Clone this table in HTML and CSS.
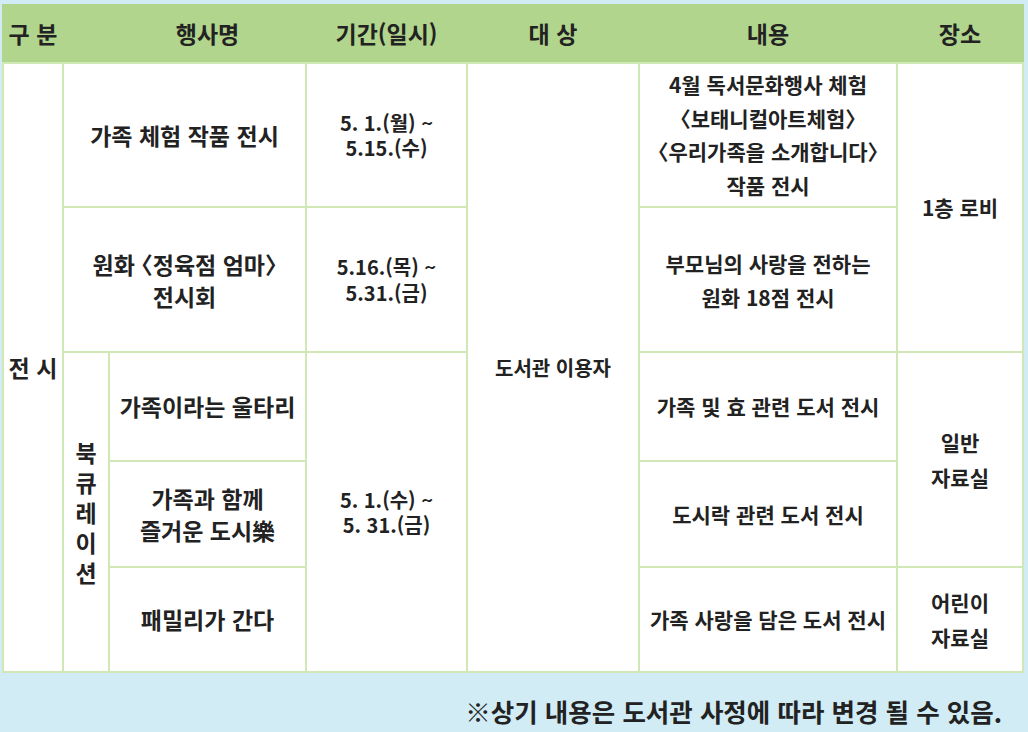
FILE: index.html
```html
<!DOCTYPE html>
<html lang="ko">
<head>
<meta charset="utf-8">
<title>가정의 달 행사 안내</title>
<link rel="stylesheet" href="styles.css">
</head>
<body>
<div class="page">
  <div class="table">
    <div class="head">
      <div class="h h-div">구 분</div>
      <div class="h h-name">행사명</div>
      <div class="h h-date">기간(일시)</div>
      <div class="h h-target">대 상</div>
      <div class="h h-content">내용</div>
      <div class="h h-place">장소</div>
    </div>
    <div class="body">
      <div class="c c-div big"><div class="t">전 시</div></div>
      <div class="c c-name1 big"><div class="t">가족 체험 작품 전시</div></div>
      <div class="c c-date1 date"><div class="t">5. 1.(월) ~<br>5.15.(수)</div></div>
      <div class="c c-target"><div class="t">도서관 이용자</div></div>
      <div class="c c-cont1 cont lh-list"><div class="t">4월 독서문화행사 체험<br><span class="br">〈</span>보태니컬아트체험<span class="br">〉</span><br><span class="br">〈</span>우리가족을 소개합니다<span class="br">〉</span><br>작품 전시</div></div>
      <div class="c c-place1 place"><div class="t">1층 로비</div></div>

      <div class="c c-name2 big lh-two"><div class="t">원화 <span class="br">〈</span>정육점 엄마<span class="br">〉</span><br>전시회</div></div>
      <div class="c c-date2 date"><div class="t">5.16.(목) ~<br>5.31.(금)</div></div>
      <div class="c c-cont2 cont lh-wide"><div class="t">부모님의 사랑을 전하는<br>원화 18점 전시</div></div>

      <div class="c c-book vert"><div class="t">북<br>큐<br>레<br>이<br>션</div></div>
      <div class="c c-name3 big"><div class="t">가족이라는 울타리</div></div>
      <div class="c c-date3 date"><div class="t">5. 1.(수) ~<br>5. 31.(금)</div></div>
      <div class="c c-cont3 cont"><div class="t">가족 및 효 관련 도서 전시</div></div>
      <div class="c c-place2 place"><div class="t">일반<br>자료실</div></div>

      <div class="c c-name4 big lh-two"><div class="t">가족과 함께<br>즐거운 도시樂</div></div>
      <div class="c c-cont4 cont"><div class="t">도시락 관련 도서 전시</div></div>

      <div class="c c-name5 big"><div class="t">패밀리가 간다</div></div>
      <div class="c c-cont5 cont"><div class="t">가족 사랑을 담은 도서 전시</div></div>
      <div class="c c-place3 place"><div class="t">어린이<br>자료실</div></div>
    </div>
  </div>
  <p class="note">※상기 내용은 도서관 사정에 따라 변경 될 수 있음.</p>
</div>
</body>
</html>
```
FILE: styles.css
```css
html, body {
  margin: 0;
  padding: 0;
}
body {
  background: #d1ecf5;
  font-family: "Noto Sans CJK KR", "Noto Sans", sans-serif;
  color: #222;
  font-weight: 700;
}
.page {
  width: 1028px;
  height: 732px;
  padding-top: 4px;
  box-sizing: border-box;
}
.table {
  margin-left: 2px;
  width: 1022px;
}
.head {
  display: grid;
  grid-template-columns: 58px 44px 195px 159px 170px 256px 124px;
  column-gap: 2px;
  padding: 0 2px;
  height: 58px;
  background: #b1d58c;
  align-items: center;
}
.h {
  font-size: 23px;
  text-align: center;
  line-height: 1;
  white-space: nowrap;
}
.h-div { grid-column: 1; }
.h-name { grid-column: 3; }
.h-date { grid-column: 4; }
.h-target { grid-column: 5; }
.h-content { grid-column: 6; }
.h-place { grid-column: 7; }

.body {
  display: grid;
  grid-template-columns: 58px 44px 195px 159px 170px 256px 124px;
  grid-template-rows: 142px 143px 107px 104px 103px;
  gap: 2px;
  padding: 2px;
  background: #cfe8b6;
}
.c {
  background: #fff;
  display: flex;
  align-items: center;
  justify-content: center;
  text-align: center;
  font-size: 20px;
  line-height: 1.25;
  white-space: nowrap;
}
.t {
  text-align: center;
}
.br {
  font-feature-settings: "halt";
}
.big { font-size: 23px; }
.date { font-size: 20px; line-height: 25.5px; }
.cont { font-size: 21px; line-height: 27px; }
.place { font-size: 21px; line-height: 35px; }
.lh-list { line-height: 33.5px; }
.lh-two { line-height: 32px; }
.lh-wide { line-height: 34px; }
.vert { line-height: 30px; font-size: 23px; }

.c-div { grid-column: 1; grid-row: 1 / 6; }
.c-name1 { grid-column: 2 / 4; grid-row: 1; }
.c-date1 { grid-column: 4; grid-row: 1; }
.c-target { grid-column: 5; grid-row: 1 / 6; }
.c-cont1 { grid-column: 6; grid-row: 1; }
.c-place1 { grid-column: 7; grid-row: 1 / 3; }
.c-name2 { grid-column: 2 / 4; grid-row: 2; }
.c-date2 { grid-column: 4; grid-row: 2; }
.c-cont2 { grid-column: 6; grid-row: 2; }
.c-book { grid-column: 2; grid-row: 3 / 6; }
.c-name3 { grid-column: 3; grid-row: 3; }
.c-date3 { grid-column: 4; grid-row: 3 / 6; }
.c-cont3 { grid-column: 6; grid-row: 3; }
.c-place2 { grid-column: 7; grid-row: 3 / 5; }
.c-name4 { grid-column: 3; grid-row: 4; }
.c-cont4 { grid-column: 6; grid-row: 4; }
.c-name5 { grid-column: 3; grid-row: 5; }
.c-cont5 { grid-column: 6; grid-row: 5; }
.c-place3 { grid-column: 7; grid-row: 5; }

.note {
  margin: 0;
  padding: 23px 26px 0 0;
  text-align: right;
  font-size: 25.5px;
  line-height: 30px;
  white-space: nowrap;
}
```
